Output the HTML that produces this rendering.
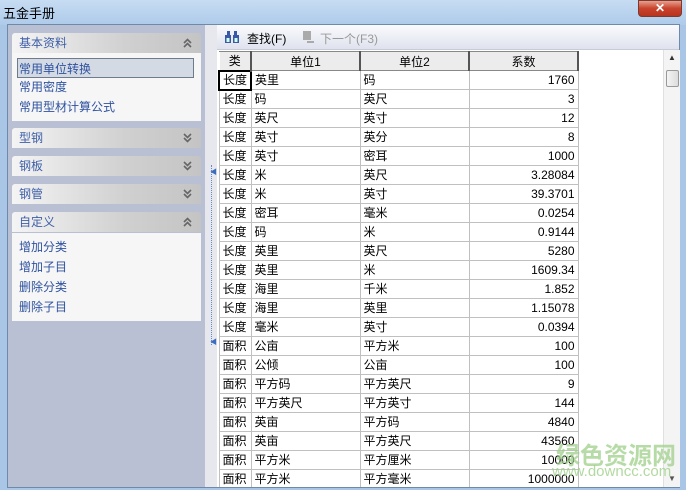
<!DOCTYPE html><html><head><meta charset="utf-8"><style>
*{margin:0;padding:0;box-sizing:border-box}
body{width:686px;height:490px;overflow:hidden;background:#a9c6e6;font-family:"Liberation Sans","Noto Sans CJK SC",sans-serif;font-size:12px;position:relative}
.title{position:absolute;left:0;top:0;width:686px;height:25px;background:linear-gradient(#c6dcf2,#aecbea);}
.title span{position:absolute;left:3px;top:3px;font-size:13px;color:#000}
.close{position:absolute;left:638px;top:0;width:44px;height:17px;border-radius:0 0 4px 4px;background:linear-gradient(#e8a090,#c8422c 50%,#b83420);border:1px solid #7a3a30;color:#fff;text-align:center;font-weight:bold;font-size:12px;line-height:15px}
.client{position:absolute;left:7px;top:24px;width:673px;height:464px;background:#f0f0f0;border:1px solid #6e8aa8}
.left{position:absolute;left:8px;top:25px;width:197px;height:462px;background:#bac0d4}
.hdr{position:absolute;left:12px;width:189px;height:20px;border-radius:3px 3px 0 0;background:linear-gradient(90deg,#f4f4f4,#d0d0d0 60%,#c4c4c4);color:#3e5fa8;font-size:12px;line-height:20px;padding-left:7px}
.hdr svg{position:absolute;right:9px;top:5px}
.box{position:absolute;left:12px;width:189px;background:#f6f6f6}
.item{position:absolute;left:7px;color:#2e52a0;font-size:12px;height:20px;line-height:20px}
.sel{border:1px solid #6f7b8c;background:#d4dae4;left:5px;width:177px;padding-left:1px}
.gap{position:absolute;left:205px;top:25px;width:12px;height:462px;background:#e6e8ee}
.split{position:absolute;left:211px;top:165px;width:1px;height:180px;border-left:1px dotted #6888c0}
.tb{position:absolute;left:217px;top:25px;width:462px;height:25px;background:linear-gradient(#fafbfd,#dfe3ee);border-bottom:1px solid #c6cbd8}
.tb span{position:absolute;top:5px;font-size:12px}
.grid{position:absolute;left:217px;top:50px;width:446px;height:437px;background:#fff;overflow:hidden}
table{border-collapse:collapse;position:absolute;left:1px;top:1px;table-layout:fixed}
td{height:19px;border:1px solid #c0c0c0;padding:0 3px;font-size:12px;white-space:nowrap;overflow:hidden;line-height:17px}
th{height:19px;border:1px solid #888;border-left-color:#fff;background:#ececec;font-weight:normal;font-size:12px;border-right:2px solid #555}
td.r{text-align:right}
.sb{position:absolute;left:663px;top:50px;width:17px;height:437px;background:#f4f4f4;border-left:1px solid #e0e0e0}
.thumb{position:absolute;left:2px;top:20px;width:13px;height:17px;border:1px solid #999;background:linear-gradient(90deg,#f4f4f4,#dcdcdc);border-radius:2px}
.wm{position:absolute;left:556px;top:436px;color:#9fd08a;font-size:24px;font-weight:bold;opacity:.75}
.wm2{position:absolute;left:552px;top:463px;color:#9fd08a;font-size:15px;opacity:.8}
</style></head><body>
<div class="title"><span>五金手册</span></div>
<div class="close">✕</div>
<div class="client"></div>
<div class="left"></div>
<div class="hdr" style="top:33px">基本资料<svg width="9" height="10"><path d="M1 5 L4.5 1.5 L8 5 M1 9 L4.5 5.5 L8 9" stroke="#666" stroke-width="1.6" fill="none"/></svg></div>
<div class="box" style="top:53px;height:68px">
<div class="item sel" style="top:5px">常用单位转换</div>
<div class="item" style="top:24px">常用密度</div>
<div class="item" style="top:44px">常用型材计算公式</div></div>
<div class="hdr" style="top:128px">型钢<svg width="9" height="10"><path d="M1 1 L4.5 4.5 L8 1 M1 5 L4.5 8.5 L8 5" stroke="#666" stroke-width="1.6" fill="none"/></svg></div>
<div class="hdr" style="top:156px">钢板<svg width="9" height="10"><path d="M1 1 L4.5 4.5 L8 1 M1 5 L4.5 8.5 L8 5" stroke="#666" stroke-width="1.6" fill="none"/></svg></div>
<div class="hdr" style="top:184px">钢管<svg width="9" height="10"><path d="M1 1 L4.5 4.5 L8 1 M1 5 L4.5 8.5 L8 5" stroke="#666" stroke-width="1.6" fill="none"/></svg></div>
<div class="hdr" style="top:212px">自定义<svg width="9" height="10"><path d="M1 5 L4.5 1.5 L8 5 M1 9 L4.5 5.5 L8 9" stroke="#666" stroke-width="1.6" fill="none"/></svg></div>
<div class="box" style="top:233px;height:88px">
<div class="item" style="top:4px">增加分类</div>
<div class="item" style="top:24px">增加子目</div>
<div class="item" style="top:44px">删除分类</div>
<div class="item" style="top:64px">删除子目</div></div>
<div class="gap"></div><div class="split"></div>
<div style="position:absolute;left:210px;top:167px;color:#3a6cc0;font-size:7px">◀</div>
<div style="position:absolute;left:210px;top:337px;color:#3a6cc0;font-size:7px">◀</div>
<div class="tb"><svg style="position:absolute;left:7px;top:5px" width="16" height="14"><rect x="1" y="5" width="6" height="8" fill="#3a5aa8"/><rect x="9" y="5" width="6" height="8" fill="#3a5aa8"/><rect x="3" y="1" width="3" height="5" fill="#3a5aa8"/><rect x="10" y="1" width="3" height="5" fill="#3a5aa8"/><rect x="2.5" y="8" width="3" height="4" fill="#cfe"/><rect x="10.5" y="8" width="3" height="4" fill="#cfe"/></svg><span style="left:30px">查找(F)</span><svg style="position:absolute;left:84px;top:5px" width="14" height="14"><rect x="2" y="1" width="8" height="9" fill="#aaa"/><path d="M6 12 H13" stroke="#aaa" stroke-width="2"/></svg><span style="left:103px;color:#999">下一个(F3)</span></div>
<div class="grid"><table>
<colgroup><col style="width:31px"><col style="width:109px"><col style="width:109px"><col style="width:109px"></colgroup>
<tr><th>类</th><th>单位1</th><th>单位2</th><th>系数</th></tr>
<tr><td style="border:2px solid #000">长度</td><td>英里</td><td>码</td><td class="r">1760</td></tr>
<tr><td>长度</td><td>码</td><td>英尺</td><td class="r">3</td></tr>
<tr><td>长度</td><td>英尺</td><td>英寸</td><td class="r">12</td></tr>
<tr><td>长度</td><td>英寸</td><td>英分</td><td class="r">8</td></tr>
<tr><td>长度</td><td>英寸</td><td>密耳</td><td class="r">1000</td></tr>
<tr><td>长度</td><td>米</td><td>英尺</td><td class="r">3.28084</td></tr>
<tr><td>长度</td><td>米</td><td>英寸</td><td class="r">39.3701</td></tr>
<tr><td>长度</td><td>密耳</td><td>毫米</td><td class="r">0.0254</td></tr>
<tr><td>长度</td><td>码</td><td>米</td><td class="r">0.9144</td></tr>
<tr><td>长度</td><td>英里</td><td>英尺</td><td class="r">5280</td></tr>
<tr><td>长度</td><td>英里</td><td>米</td><td class="r">1609.34</td></tr>
<tr><td>长度</td><td>海里</td><td>千米</td><td class="r">1.852</td></tr>
<tr><td>长度</td><td>海里</td><td>英里</td><td class="r">1.15078</td></tr>
<tr><td>长度</td><td>毫米</td><td>英寸</td><td class="r">0.0394</td></tr>
<tr><td>面积</td><td>公亩</td><td>平方米</td><td class="r">100</td></tr>
<tr><td>面积</td><td>公倾</td><td>公亩</td><td class="r">100</td></tr>
<tr><td>面积</td><td>平方码</td><td>平方英尺</td><td class="r">9</td></tr>
<tr><td>面积</td><td>平方英尺</td><td>平方英寸</td><td class="r">144</td></tr>
<tr><td>面积</td><td>英亩</td><td>平方码</td><td class="r">4840</td></tr>
<tr><td>面积</td><td>英亩</td><td>平方英尺</td><td class="r">43560</td></tr>
<tr><td>面积</td><td>平方米</td><td>平方厘米</td><td class="r">10000</td></tr>
<tr><td>面积</td><td>平方米</td><td>平方毫米</td><td class="r">1000000</td></tr>
</table></div>
<div class="sb"><div style="position:absolute;left:4px;top:3px;font-size:8px;color:#333">▲</div><div class="thumb"></div><div style="position:absolute;left:4px;top:424px;font-size:8px;color:#555">▼</div></div>
<div class="wm">绿色资源网</div>
<div class="wm2">www.downcc.com</div>
</body></html>
